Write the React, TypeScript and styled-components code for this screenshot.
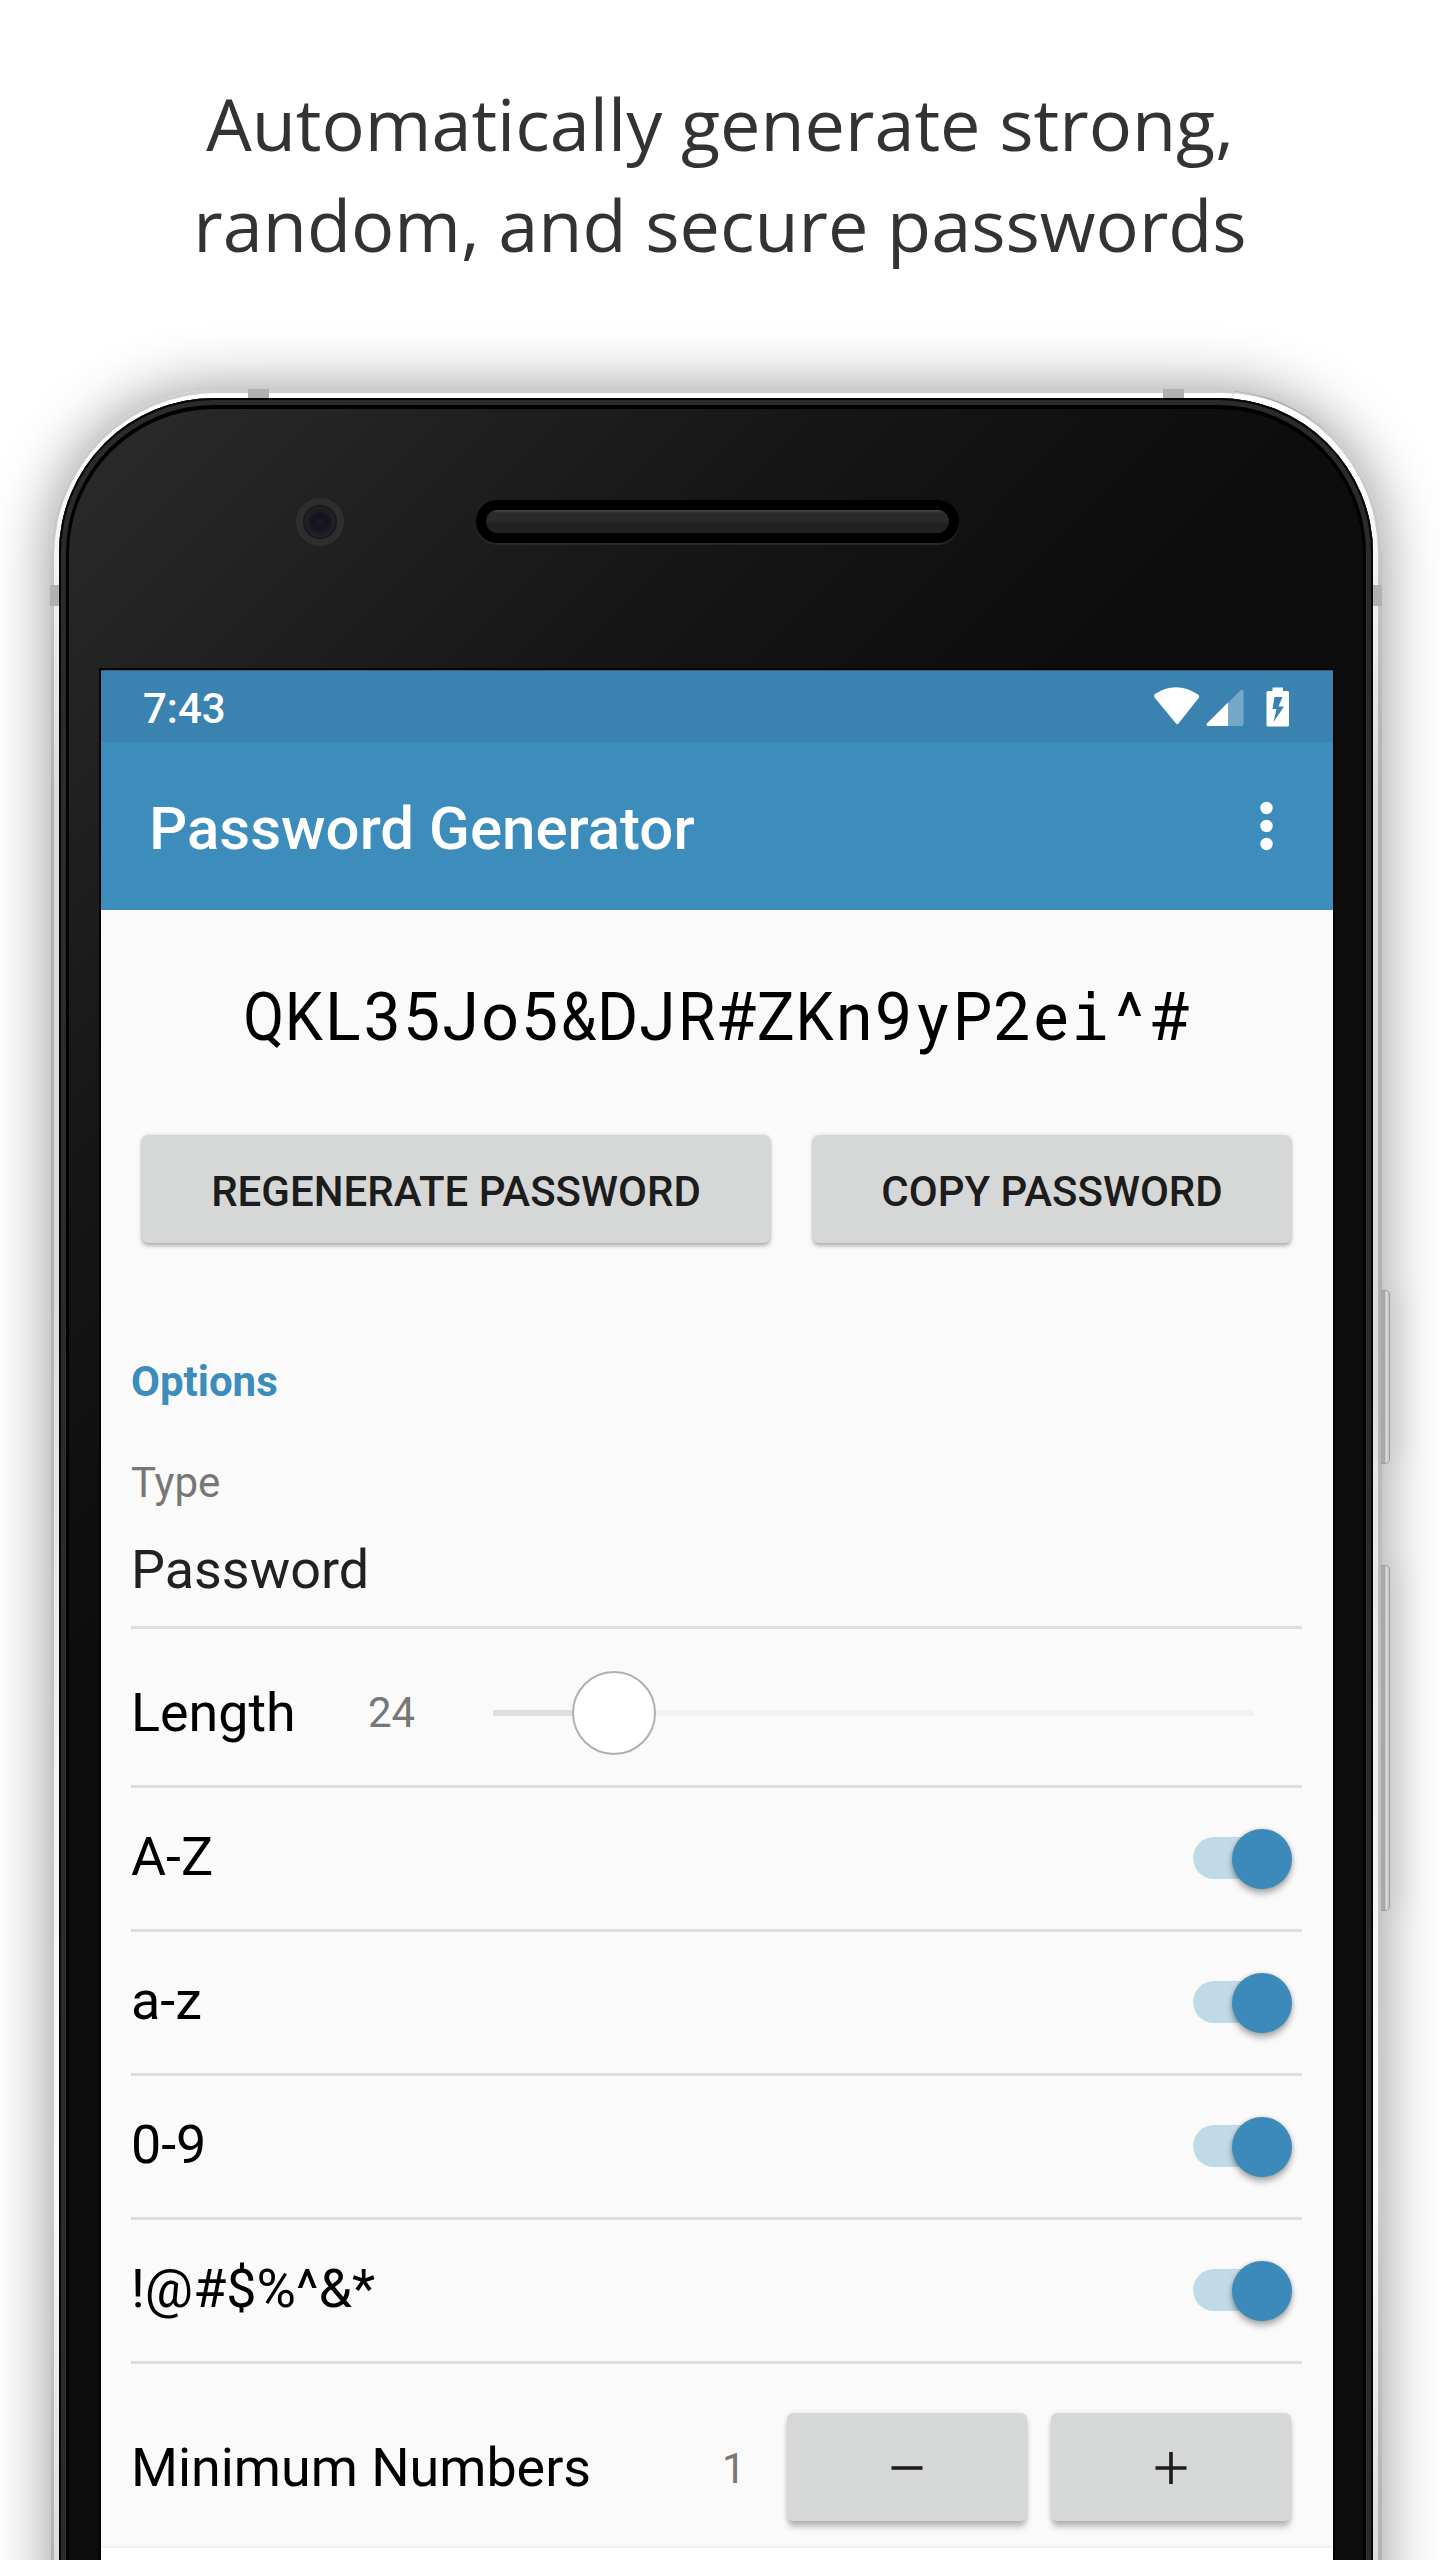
import React from "react";
import styled, { createGlobalStyle, css } from "styled-components";

const GlobalStyle = createGlobalStyle`
  html, body { margin: 0; padding: 0; background: #fff; }
  *, *::before, *::after { box-sizing: border-box; }
`;

const Page = styled.main`
  width: 1440px;
  height: 2560px;
  overflow: hidden;
  background: #fff;
  font-family: Roboto, "Liberation Sans", sans-serif;
`;

const Headline = styled.h1`
  margin: 0;
  height: 390px;
  padding-top: 73px;
  font: 400 72px/101px "Open Sans", sans-serif;
  color: #333;
  text-align: center;
`;

const Phone = styled.div`
  position: relative;
  width: 1331px;
  height: 2400px;
  margin-left: 51px;
  padding: 8px 9px 0 8px;
  border-radius: 163px 163px 0 0;
  background: linear-gradient(180deg, #fff 0, #fafafa 100px, #dcdcdc 400px, #dcdcdc 900px, #f4f4f4 1400px, #fafafa 1800px, #dcdcdc 2170px);
  box-shadow: inset 3px 3px 0 rgba(0, 0, 0, 0.19), inset -4px 0 0 rgba(0, 0, 0, 0.19),
    0 0 60px rgba(0, 0, 0, 0.42);
`;

const Bezel = styled.div`
  position: relative;
  height: 100%;
  padding: 11px 10px 0;
  border-radius: 155px 155px 0 0;
  background: #000;
  box-shadow: inset 0 0 0 2px #050505, inset 0 0 0 7px #2b2b2b;
`;

const Glass = styled.div`
  height: 100%;
  padding: 261px 30px 0;
  border-radius: 145px 145px 0 0;
  background: linear-gradient(135deg, #292929 60px, #161616 540px, #0f0f0f 800px, #0d0d0d 900px);
`;

const Antenna = styled.i<{ $x: number; $y: number; $side?: boolean }>`
  position: absolute;
  left: ${(p) => p.$x}px;
  top: ${(p) => p.$y}px;
  width: ${(p) => (p.$side ? 9 : 21)}px;
  height: ${(p) => (p.$side ? 21 : 10)}px;
  background: #b1b1b1;
`;

const SideKey = styled.i<{ $y: number; $h: number }>`
  position: absolute;
  left: 1330px;
  top: ${(p) => p.$y}px;
  width: 9px;
  height: ${(p) => p.$h}px;
  border: 1px solid #9c9c9c;
  border-left: 0;
  border-radius: 0 5px 5px 0;
  background: linear-gradient(90deg, #a9a9a9 4px, #e0e0e0 5px, #c4c4c4 8px);
  box-shadow: 10px 0 30px rgba(0, 0, 0, 0.14);
`;

const Camera = styled.i`
  position: absolute;
  left: 237px;
  top: 100px;
  width: 48px;
  height: 48px;
  border: 7px solid #2e2e2e;
  border-radius: 50%;
  background: radial-gradient(circle, #1b1830 0, #15131a 28%, #232028 60%, #121115 74%);
`;

const Speaker = styled.i`
  position: absolute;
  left: 417px;
  top: 102px;
  width: 483px;
  height: 43px;
  border: 10px solid #000;
  border-radius: 22px;
  background: linear-gradient(180deg, #4a4a4a 0, #2b2b2b 3px, #292929 11px, #212121 13px);
  box-shadow: 0 2px 1px #2b2b2b;
`;

const Screen = styled.div`
  display: flex;
  flex-direction: column;
  width: 1232px;
  height: 1900px;
  margin-left: 2px;
  background: #fafafa;
  outline: 2px solid #020202;
`;

const StatusBar = styled.header`
  display: flex;
  align-items: center;
  justify-content: space-between;
  height: 72px;
  padding: 4px 43px 0 42px;
  background: #3a83b0;
  box-shadow: inset 0 1px 0 #35647f;
  color: #fff;
  font-size: 42px;
  font-weight: 500;
`;

const StatusIcons = styled.svg`
  width: 138px;
  height: 42px;
`;

const AppBar = styled.div`
  display: flex;
  align-items: center;
  justify-content: space-between;
  height: 168px;
  padding: 0 60px 0 48px;
  background: #3c8cbc;
  color: #fff;
`;

const Title = styled.h2`
  margin: 0;
  padding-top: 4px;
  font-size: 60px;
  font-weight: 500;
`;

const MoreIcon = styled.svg`
  width: 13px;
  height: 50px;
`;

const Generated = styled.div`
  display: flex;
  justify-content: center;
  height: 80px;
  margin: 68px 1px 0 0;
  font-size: 66px;
  line-height: 80px;
  color: #000;
`;

const Glyph = styled.span<{ $squeeze: number; $slab: boolean }>`
  display: flex;
  justify-content: center;
  width: 39.35px;
  transform: scaleX(${(p) => p.$squeeze});
  ${(p) =>
    p.$slab &&
    css`
      font-family: "DejaVu Sans Mono", monospace;
      font-size: 64px;
    `}
`;

const raised = css`
  display: flex;
  align-items: center;
  justify-content: center;
  height: 108px;
  border: 0;
  border-radius: 6px;
  background: #d6d7d7;
  color: #1c1c1c;
  font-family: inherit;
`;

const Actions = styled.div`
  display: flex;
  gap: 43px;
  margin: 77px 41px 0;
`;

const ActionButton = styled.button<{ $width: number }>`
  ${raised}
  width: ${(p) => p.$width}px;
  padding: 4px 0 0;
  box-shadow: 0 3px 4px rgba(0, 0, 0, 0.27), 0 0 4px rgba(0, 0, 0, 0.12);
  font-size: 42px;
  font-weight: 500;
`;

const Options = styled.section`
  margin: 114px 31px 0 30px;
`;

const SectionTitle = styled.h3`
  margin: 0;
  font-size: 42px;
  font-weight: 700;
  line-height: 50px;
  color: #3c8cbc;
`;

const TypeField = styled.div`
  display: flex;
  flex-direction: column;
  height: 222px;
  padding-top: 51px;
  border-bottom: 3px solid #dedede;
`;

const FieldCaption = styled.span`
  margin-bottom: 30px;
  font-size: 42px;
  line-height: 50px;
  color: #777;
`;

const FieldValue = styled.span`
  font-size: 53.9px;
  line-height: 64px;
  color: #212121;
`;

const Row = styled.div<{ $height: number; $top?: number; $last?: boolean }>`
  display: flex;
  align-items: center;
  height: ${(p) => p.$height}px;
  padding-top: ${(p) => p.$top ?? 0}px;
  border-bottom: ${(p) => (p.$last ? "0" : "3px solid #dedede")};
`;

const Label = styled.span<{ $up?: number; $down?: number }>`
  flex: 1;
  padding: ${(p) => p.$down ?? 0}px 0 ${(p) => p.$up ?? 0}px;
  font-size: 53.8px;
  line-height: 64px;
  color: #000;
`;

const Value = styled.span<{ $width: number; $down?: number }>`
  width: ${(p) => p.$width}px;
  padding-top: ${(p) => p.$down ?? 0}px;
  font-size: 42px;
  color: #777;
`;

const Slider = styled.div`
  display: flex;
  align-items: center;
  width: 761px;
  margin-right: 48px;
`;

const SliderLine = styled.i<{ $width: number; $on?: boolean }>`
  width: ${(p) => p.$width}px;
  height: 6px;
  background: ${(p) => (p.$on ? "#dedede" : "#f2f2f2")};
`;

const SliderKnob = styled.i`
  width: 84px;
  height: 84px;
  border: 2.5px solid #b0b0b0;
  border-radius: 50%;
  background: #fff;
`;

const Toggle = styled.div`
  display: flex;
  align-items: center;
  height: 60px;
  margin-right: 10px;
`;

const ToggleTrack = styled.i`
  width: 78px;
  height: 42px;
  margin: -2px -39px 0 0;
  border-radius: 21px;
  background: #c1dae7;
`;

const ToggleKnob = styled.i`
  width: 60px;
  height: 60px;
  border-radius: 50%;
  background: #3c8ab9;
  box-shadow: 0 5px 6px rgba(0, 0, 0, 0.28), 0 0 4px rgba(0, 0, 0, 0.18);
`;

const StepButton = styled.button`
  ${raised}
  width: 240px;
  padding: 2px 0 0;
  box-shadow: 0 7px 6px -1px rgba(0, 0, 0, 0.24), 0 1px 5px rgba(0, 0, 0, 0.12);
`;

const StepIcon = styled.svg`
  width: 32px;
  height: 32px;
  stroke: #1c1c1c;
  stroke-width: 3.6;
`;

const Stepper = styled.div`
  display: flex;
  gap: 24px;
  margin-right: 11px;
`;

const BottomBar = styled.footer`
  flex: 1;
  background: #fff;
  box-shadow: 0 -1px 5px rgba(0, 0, 0, 0.08);
`;

const SQUEEZE: Record<string, number> = { Q: 0.9, K: 0.92, "&": 0.87, R: 0.92, D: 0.95, Z: 0.96, P: 0.94 };

const PASSWORD = "QKL35Jo5&DJR#ZKn9yP2ei^#";
const CHARACTER_SETS = ["A-Z", "a-z", "0-9", "!@#$%^&*"];

export default function App() {
  return (
    <Page>
      <GlobalStyle />
      <Headline>
        Automatically generate strong,
        <br />
        random, and secure passwords
      </Headline>
      <Phone>
        <SideKey $y={900} $h={174} />
        <SideKey $y={1175} $h={346} />
        <Antenna $x={197} $y={-1} />
        <Antenna $x={1112} $y={-1} />
        <Antenna $x={-1} $y={195} $side />
        <Antenna $x={1322} $y={195} $side />
        <Bezel>
          <Camera />
          <Speaker />
          <Glass>
            <Screen>
              <StatusBar>
                <span>7:43</span>
                <StatusIcons viewBox="0 0 138 42" fill="#fff">
                  <path d="M2 7.5Q24 -7 46 7.5Q48 9 46.6 11L26.5 36.5Q25.2 38 24 36.5L3 11Q1.5 9 3 7.5Z" />
                  <path d="M55 36.5L88.5 3.5Q91.5 1.5 91.5 5V37Q91.5 39 89.5 39H57Q53.5 39 55 36.5Z" opacity=".3" />
                  <path d="M55 36.5L76 15.5V39H57Q53.5 39 55 36.5Z" />
                  <path
                    fillRule="evenodd"
                    d="M120.5 0.5H131V4H135.5Q137 4 137 5.5V38Q137 39.5 135.5 39.5H116Q114.5 39.5 114.5 38V5.5Q114.5 4 116 4H120.5ZM122.5 10L120.5 22H124.5L121.500 35L132 19.5H126.5L130.5 10Z"
                  />
                </StatusIcons>
              </StatusBar>
              <AppBar>
                <Title>Password Generator</Title>
                <MoreIcon viewBox="0 0 13 50" fill="#fff">
                  <circle cx="6.5" cy="7" r="6.2" />
                  <circle cx="6.5" cy="25" r="6.2" />
                  <circle cx="6.5" cy="43" r="6.2" />
                </MoreIcon>
              </AppBar>
              <Generated>
                {PASSWORD.split("").map((c, i) => (
                  <Glyph key={i} $squeeze={SQUEEZE[c] ?? 1} $slab={c === "i"}>
                    {c}
                  </Glyph>
                ))}
              </Generated>
              <Actions>
                <ActionButton $width={628}>REGENERATE PASSWORD</ActionButton>
                <ActionButton $width={478}>COPY PASSWORD</ActionButton>
              </Actions>
              <Options>
                <SectionTitle>Options</SectionTitle>
                <TypeField>
                  <FieldCaption>Type</FieldCaption>
                  <FieldValue>Password</FieldValue>
                </TypeField>
                <Row $height={159} $top={11}>
                  <Label>Length</Label>
                  <Value $width={125}>24</Value>
                  <Slider>
                    <SliderLine $width={79} $on />
                    <SliderKnob />
                    <SliderLine $width={598} />
                  </Slider>
                </Row>
                {CHARACTER_SETS.map((name) => (
                  <Row key={name} $height={144}>
                    <Label $up={4}>{name}</Label>
                    <Toggle>
                      <ToggleTrack />
                      <ToggleKnob />
                    </Toggle>
                  </Row>
                ))}
                <Row $height={184} $top={22} $last>
                  <Label $down={2}>Minimum Numbers</Label>
                  <Value $width={65} $down={2}>
                    1
                  </Value>
                  <Stepper>
                    <StepButton aria-label="Decrease">
                      <StepIcon viewBox="0 0 32 32">
                        <path d="M0.5 16H31.5" />
                      </StepIcon>
                    </StepButton>
                    <StepButton aria-label="Increase">
                      <StepIcon viewBox="0 0 32 32">
                        <path d="M0.5 16H31.5M16 0V32" />
                      </StepIcon>
                    </StepButton>
                  </Stepper>
                </Row>
              </Options>
              <BottomBar />
            </Screen>
          </Glass>
        </Bezel>
      </Phone>
    </Page>
  );
}
